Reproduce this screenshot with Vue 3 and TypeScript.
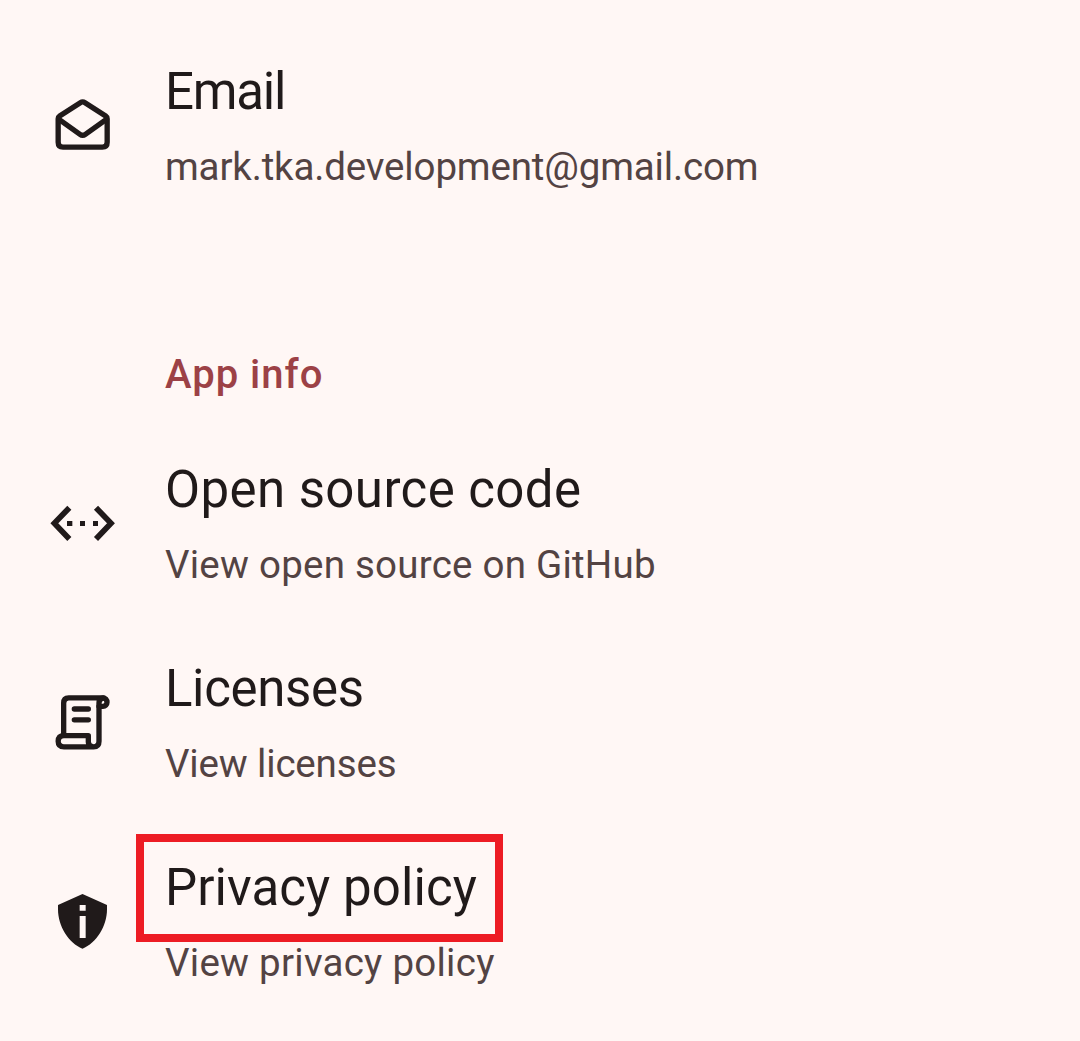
<script setup lang="ts">
type IconName = 'mail' | 'code' | 'scroll' | 'shield'

interface Entry {
  icon: IconName
  title: string
  subtitle: string
  titleTracking: number
  subtitleTracking: number
  highlighted?: boolean
}

const contact: Entry[] = [
  { icon: 'mail', title: 'Email', subtitle: 'mark.tka.development@gmail.com', titleTracking: -1.2, subtitleTracking: -0.15 },
]

const appInfo: Entry[] = [
  { icon: 'code', title: 'Open source code', subtitle: 'View open source on GitHub', titleTracking: 0.41, subtitleTracking: 0.237 },
  { icon: 'scroll', title: 'Licenses', subtitle: 'View licenses', titleTracking: -0.35, subtitleTracking: -0.16 },
  { icon: 'shield', title: 'Privacy policy', subtitle: 'View privacy policy', titleTracking: 0.08, subtitleTracking: 0.26, highlighted: true },
]

const sections = [
  { heading: '', entries: contact },
  { heading: 'App info', entries: appInfo },
]

const viewBoxes: Record<IconName, string> = {
  mail: '0 -6 252 252',
  code: '0 -27 252 252',
  scroll: '0 0 252 252',
  shield: '0 -3 252 252',
}
</script>

<template>
  <main class="settings">
    <section v-for="section in sections" :key="section.heading">
      <h2 v-if="section.heading" class="heading">{{ section.heading }}</h2>
      <div v-for="entry in section.entries" :key="entry.title" class="row">
        <svg class="icon" :viewBox="viewBoxes[entry.icon]" aria-hidden="true">
          <g v-if="entry.icon === 'mail'" class="line">
            <path d="M54.500 101V172Q54.500 186.500 69 186.500H187Q201.500 186.500 201.500 172V101Q201.500 96 197 93L135 53Q128 48.500 121 53L59 93Q54.500 96 54.500 101Z" />
            <path d="M57 103L120 148Q128 154 136 148L199 103" />
          </g>
          <g v-else-if="entry.icon === 'code'">
            <path class="line sharp" d="M88 53L43 100L88 147M168 53L213 100L168 147" />
            <path class="fill" d="M81 93h16v15h-16zM120 93h15v15h-15zM159 93h15v15h-15z" />
          </g>
          <g v-else-if="entry.icon === 'scroll'" class="line">
            <path d="M71 164V69Q71 53.500 86 53.500H188C196 53.500 201 59 201 67C201 74 196 79 189 79H177" />
            <path d="M190 54Q177 55 177 69V184Q177 200.500 161 200.500H72Q54.500 200.500 54.500 184Q54.500 167 72 167H145V186Q145 200 161 200.500" />
            <path d="M103 87H145M103 119.500H145" />
          </g>
          <path v-else class="fill" fill-rule="evenodd" d="M127.500 42L201 75V88C201 139 169 190 127.500 206C86 190 54 139 54 88V75ZM119 75V92H137V75ZM119 108V174H137V108Z" />
        </svg>
        <div class="text">
          <div class="title" :style="{ letterSpacing: entry.titleTracking + 'px' }">{{ entry.title }}</div>
          <div class="subtitle" :style="{ letterSpacing: entry.subtitleTracking + 'px' }">{{ entry.subtitle }}</div>
        </div>
        <div v-if="entry.highlighted" class="highlight"></div>
      </div>
    </section>
  </main>
</template>

<style>
body {
  margin: 0;
  background: #fff7f5;
}
</style>

<style scoped>
.settings {
  box-sizing: border-box;
  height: 1041px;
  padding-top: 25px;
  overflow: hidden;
  background: #fff7f5;
  font-family: Roboto, sans-serif;
}

.heading {
  box-sizing: border-box;
  height: 199px;
  margin: 0;
  padding: 126px 0 0 165px;
  color: #9c4146;
  font-size: 40px;
  font-weight: 500;
  line-height: 50px;
  letter-spacing: 1px;
}

.row {
  position: relative;
  display: flex;
  align-items: center;
  gap: 41px;
  height: 199px;
  padding-left: 40px;
}

.icon {
  flex: none;
  width: 84px;
  height: 84px;
}

.line {
  fill: none;
  stroke: #201a1a;
  stroke-width: 16;
  stroke-linecap: round;
  stroke-linejoin: round;
}

.sharp {
  stroke-width: 17;
  stroke-linecap: butt;
  stroke-linejoin: miter;
}

.fill {
  fill: #201a1a;
}

.text {
  padding-top: 2px;
  white-space: nowrap;
}

.title {
  color: #201a1a;
  font-size: 51px;
  line-height: 70px;
}

.subtitle {
  margin-top: 12px;
  color: #534343;
  font-size: 38.5px;
  line-height: 55px;
}

.highlight {
  position: absolute;
  top: 13px;
  left: 136px;
  box-sizing: border-box;
  width: 367px;
  height: 108px;
  border: 8px solid #ed1c24;
}
</style>
